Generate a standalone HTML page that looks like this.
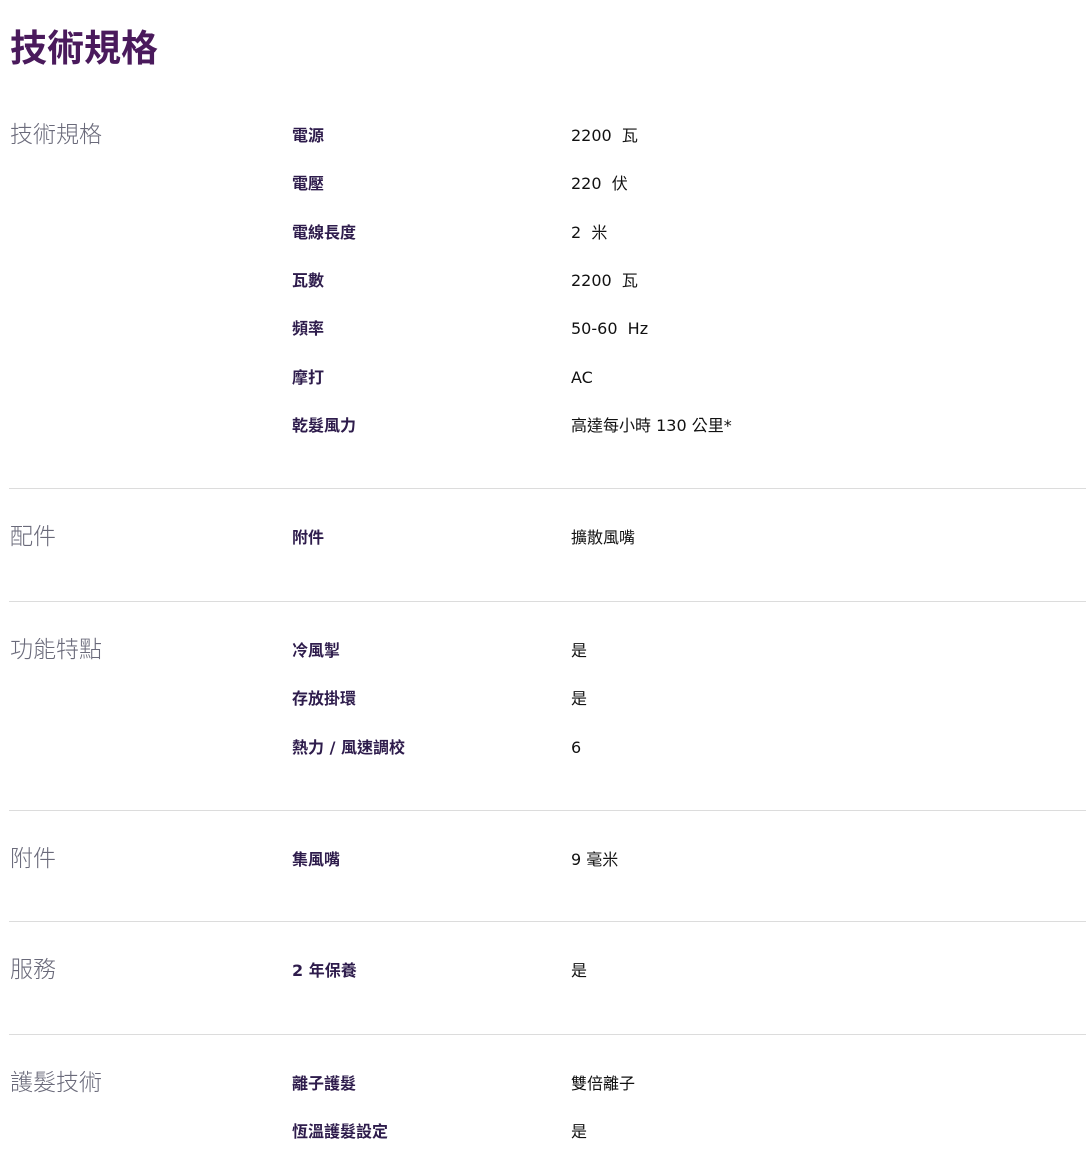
<!DOCTYPE html>
<html><head><meta charset="utf-8"><style>
body{margin:0;background:#fff;width:1086px;height:1166px;position:relative;overflow:hidden;font-family:"DejaVu Sans","Noto Sans CJK TC",sans-serif}
.a{position:absolute;white-space:nowrap}
h1{position:absolute;left:10px;top:24px;margin:0;font-size:37px;line-height:50px;color:#4a1a5c;font-weight:bold;font-family:"Liberation Sans","Noto Sans CJK TC",sans-serif}
.s{left:10px;font-size:23px;line-height:30px;color:#6a6a7a;font-weight:300;font-family:"Liberation Sans","Noto Sans CJK TC",sans-serif}
.l{left:292px;font-size:16px;line-height:20px;color:#2e1c4c;font-weight:bold}
.v{left:571px;font-size:16px;line-height:20px;color:#111}
.d{position:absolute;left:9px;width:1077px;height:1px;background:#dcdcdc}
</style></head><body>
<h1>技術規格</h1>
<div class="a s" style="top:119px">技術規格</div>
<div class="a l" style="top:126px">電源</div><div class="a v" style="top:126px">2200&nbsp; 瓦</div>
<div class="a l" style="top:174px">電壓</div><div class="a v" style="top:174px">220&nbsp; 伏</div>
<div class="a l" style="top:223px">電線長度</div><div class="a v" style="top:223px">2&nbsp; 米</div>
<div class="a l" style="top:271px">瓦數</div><div class="a v" style="top:271px">2200&nbsp; 瓦</div>
<div class="a l" style="top:319px">頻率</div><div class="a v" style="top:319px">50-60&nbsp; Hz</div>
<div class="a l" style="top:368px">摩打</div><div class="a v" style="top:368px">AC</div>
<div class="a l" style="top:416px">乾髮風力</div><div class="a v" style="top:416px">高達每小時 130 公里*</div>
<div class="d" style="top:488px"></div>
<div class="a s" style="top:521px">配件</div>
<div class="a l" style="top:528px">附件</div><div class="a v" style="top:528px">擴散風嘴</div>
<div class="d" style="top:601px"></div>
<div class="a s" style="top:634px">功能特點</div>
<div class="a l" style="top:641px">冷風掣</div><div class="a v" style="top:641px">是</div>
<div class="a l" style="top:689px">存放掛環</div><div class="a v" style="top:689px">是</div>
<div class="a l" style="top:738px">熱力 / 風速調校</div><div class="a v" style="top:738px">6</div>
<div class="d" style="top:810px"></div>
<div class="a s" style="top:843px">附件</div>
<div class="a l" style="top:850px">集風嘴</div><div class="a v" style="top:850px">9 毫米</div>
<div class="d" style="top:921px"></div>
<div class="a s" style="top:954px">服務</div>
<div class="a l" style="top:961px">2 年保養</div><div class="a v" style="top:961px">是</div>
<div class="d" style="top:1034px"></div>
<div class="a s" style="top:1067px">護髮技術</div>
<div class="a l" style="top:1074px">離子護髮</div><div class="a v" style="top:1074px">雙倍離子</div>
<div class="a l" style="top:1122px">恆溫護髮設定</div><div class="a v" style="top:1122px">是</div>
</body></html>
